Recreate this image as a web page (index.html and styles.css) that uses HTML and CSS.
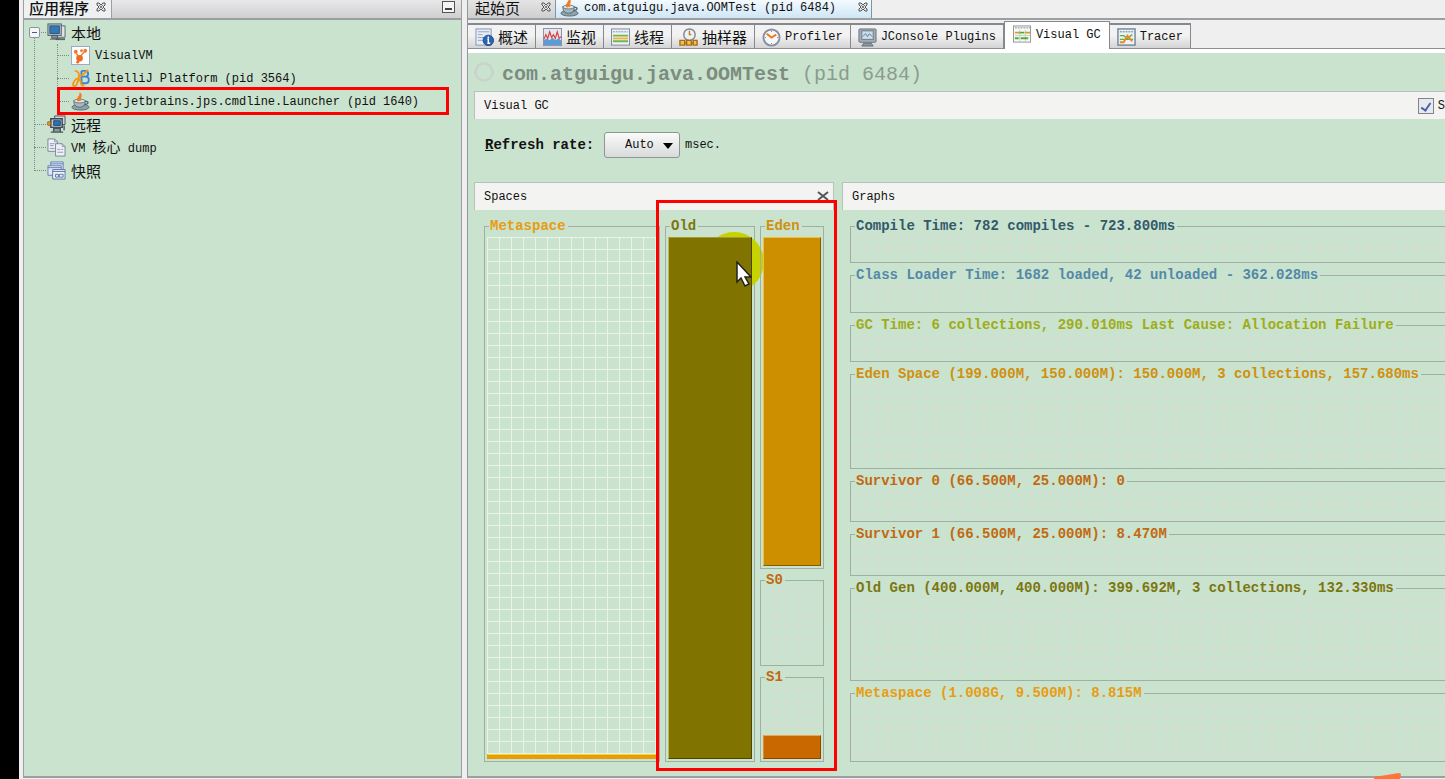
FILE: index.html
```
<!DOCTYPE html>
<html lang="zh-CN">
<head>
<meta charset="utf-8">
<title>VisualVM</title>
<link rel="stylesheet" href="styles.css">
</head>
<body>
<svg class="defs" aria-hidden="true">
  <symbol id="close" viewBox="0 0 10 10"><path d="M1 1h2l2 2 2-2h2v2L7 5l2 2v2H7L5 7 3 9H1V7l2-2-2-2z" fill="#e4e4e4" stroke="#555"/><path d="M3 3l4 4M7 3L3 7" stroke="#666" stroke-width=".8"/></symbol>
  <symbol id="java" viewBox="0 0 20 20"><ellipse cx="10" cy="16" rx="9" ry="3" fill="#8fa1ab" stroke="#596b76"/><path d="M3 9h12c0 5-2 7-6 7s-6-2-6-7z" fill="#a9b8bf" stroke="#566a75"/><ellipse cx="9" cy="9.500" rx="6" ry="2" fill="#dde5e7" stroke="#667a84"/><path d="M15 10c4-1 4 3-1 3" fill="none" stroke="#566a75" stroke-width="1.500"/><path d="M7 10C4 6 10 5 9 0c5 4 0 6 2 9z" fill="#f47b20"/></symbol>
  <symbol id="monitor" viewBox="0 0 20 20"><path d="M7 3h12v12H7z" fill="#dfe3e5" stroke="#5c6870"/><path d="M9 17h10" stroke="#5c6870" stroke-width="2"/><rect x="1" y="1" width="14" height="12" fill="#c3cdd2" stroke="#4a555e"/><rect x="3" y="3" width="10" height="8" fill="#3578b5" stroke="#24577f"/><path d="M5 13h6v3H5zM3 17h10" fill="#88949b" stroke="#4a555e"/></symbol>
</svg>
<div class="app">
  <div class="edge"></div>
  <aside class="side">
    <header class="side-head">
      <div class="side-tab"><span>应用程序</span><svg class="x"><use href="#close"/></svg></div>
      <button class="minimize" aria-label="Minimize"></button>
    </header>
    <ul class="tree">
      <li><button class="toggle" aria-label="Collapse"></button><div class="row"><svg class="ico"><use href="#monitor"/></svg><span class="cjk">本地</span></div>
        <ul class="branch">
          <li><div class="row"><svg class="ico" viewBox="0 0 20 20"><rect x=".5" y=".5" width="19" height="19" fill="#fff" stroke="#9aa6c8"/><circle cx="5" cy="6" r="2" fill="#f37a2c"/><circle cx="11" cy="5" r="1.500" fill="#f37a2c"/><circle cx="15" cy="5" r="2" fill="#f37a2c"/><path d="M14 6l-5 6" stroke="#f37a2c" stroke-width="1.500"/><path d="M5 7l3 4" stroke="#f37a2c" stroke-width="1.500"/><circle cx="9" cy="13" r="3.500" fill="#f06a1d"/><circle cx="7" cy="17" r="1.500" fill="#f06a1d"/></svg><span>VisualVM</span></div></li>
          <li><div class="row"><svg class="ico" viewBox="0 0 20 20"><path d="M11 2h4c4 0 4 6 0 6h-3 3c5 0 5 7 0 7h-4V2" fill="none" stroke="#3d83cf" stroke-width="2"/><path d="M4 2c4 0 5 3 4 8s-3 9-5 8 0-5 2-7 4-2 5 2 1 5 4 4M9 8c3-1 6-4 9-7" fill="none" stroke="#f39a16" stroke-width="2"/></svg><span>IntelliJ Platform (pid 3564)</span></div></li>
          <li class="marked"><div class="row"><svg class="ico"><use href="#java"/></svg><span>org.jetbrains.jps.cmdline.Launcher (pid 1640)</span></div></li>
        </ul>
      </li>
      <li><div class="row"><svg class="ico" viewBox="0 0 20 20"><path d="M8 1h11v9H8z" fill="#cfd5d8" stroke="#4a555e"/><path d="M4 4h12v9H4z" fill="#bcc6cb" stroke="#3f4b54" stroke-width="1.500"/><path d="M7 6h7v5H7z" fill="#2f6fae" stroke="#214e78"/><path d="M7 14h7v4H7zM4 18h13M18 11v5" stroke="#4a555e" stroke-width="1.500" fill="#899"/><circle cx="2" cy="9" r="2" fill="#e49722" stroke="#a56512"/></svg><span class="cjk">远程</span></div></li>
      <li><div class="row"><svg class="ico" viewBox="0 0 20 20"><path d="M1 1h7l3 3v10H1z" fill="#eef0f5" stroke="#7883a0"/><path d="M8 1v3h3M3 6h5M3 8h4M3 11h5" fill="none" stroke="#8e98b4"/><path d="M9 6h7l3 3v10H9z" fill="#eef0f5" stroke="#7883a0"/><path d="M16 6v3h3M11 12h3M15 12h2M11 15h6" fill="none" stroke="#8e98b4"/></svg><span>VM <span class="cjk-small">核心</span> dump</span></div></li>
      <li><div class="row"><svg class="ico" viewBox="0 0 20 20"><path d="M4 1h13v10H4z" fill="#dfe8f5" stroke="#6580b5"/><path d="M4 3h13" stroke="#6580b5"/><path d="M1 5h14v10H1z" fill="#dfe8f5" stroke="#6580b5"/><path d="M1 7h14" stroke="#6580b5"/><path d="M6 9h13v10H6z" fill="#eef2f8" stroke="#5873ab"/><path d="M6 11h13M9 14h3v3H9zM13 14h4v3h-4z" fill="none" stroke="#5873ab"/></svg><span class="cjk">快照</span></div></li>
    </ul>
  </aside>
  <div class="splitter"></div>
  <main class="main">
    <nav class="docs">
      <button class="doc first"><span class="cjk">起始页</span><svg class="x"><use href="#close"/></svg></button>
      <button class="doc current"><svg class="ico"><use href="#java"/></svg><span>com.atguigu.java.OOMTest (pid 6484)</span><svg class="x"><use href="#close"/></svg></button>
    </nav>
    <nav class="views">
      <button class="view"><svg class="ico" viewBox="0 0 20 20"><rect x="1" y="1" width="16" height="17" fill="#e8edf5" stroke="#8492ad"/><path d="M3 4h12M3 7h5M3 10h7M3 13h5" stroke="#8ca1c4"/><circle cx="14" cy="13" r="5.500" fill="#2c64b4" stroke="#174684"/><path d="M14 9v2M13 12h1v4h-1 3" stroke="#fff" stroke-width="1.500" fill="none"/></svg><span class="cjk">概述</span></button>
      <button class="view"><svg class="ico" viewBox="0 0 20 20"><rect x=".5" y=".5" width="19" height="18" fill="#e2e7f0" stroke="#8492ad"/><path d="M1 18v-5l3-2 3 2 3-3 3 3 3-2 3 2v5z" fill="#5d9bd7"/><path d="M1 12l2-5 2 4 2-7 2 6 2-3 2 4 2-7 2 7 2-2" fill="none" stroke="#df3b3b" stroke-width="1.200"/></svg><span class="cjk">监视</span></button>
      <button class="view"><svg class="ico" viewBox="0 0 20 20"><rect x=".5" y="1" width="19" height="17" fill="#eef1f5" stroke="#7a879d"/><path d="M2 4h16" stroke="#7390bb" stroke-dasharray="2 1"/><path d="M2 8h16M2 14h16" stroke="#73b74c" stroke-width="2"/><path d="M2 11h16" stroke="#efb443" stroke-width="2"/></svg><span class="cjk">线程</span></button>
      <button class="view"><svg class="ico" viewBox="0 0 20 20"><circle cx="11" cy="7" r="6" fill="#edf1f3" stroke="#7d8790" stroke-width="1.500"/><path d="M11 3v4h2" stroke="#c67b20" fill="none" stroke-width="1.500"/><path d="M1 13h5v5H1zM8 13h5v5H8zM15 13h4v5h-4zM6 16h2M13 16h2" fill="#f6c04c" stroke="#a96d16" stroke-width="1.500"/></svg><span class="cjk">抽样器</span></button>
      <button class="view"><svg class="ico" viewBox="0 0 20 20"><circle cx="10" cy="10" r="8.500" fill="#f5f6f8" stroke="#8790a0" stroke-width="2"/><path d="M10 3v1M10 16v1M3 10h1M16 10h1" stroke="#6b7585"/><path d="M5 6l5 4 5-3" fill="none" stroke="#ed7a1c" stroke-width="2"/></svg><span>Profiler</span></button>
      <button class="view"><svg class="ico" viewBox="0 0 20 20"><rect x="1" y="1" width="18" height="14" rx="1" fill="#a4adb5" stroke="#68737e"/><rect x="4" y="3" width="12" height="9" fill="#cddce7" stroke="#6b7b89"/><path d="M5 9l3-3 2 3 2-3 3 3" fill="none" stroke="#5c7d9d"/><path d="M6 16h8l2 3H4z" fill="#8d98a3" stroke="#626e79"/></svg><span>JConsole Plugins</span></button>
      <button class="view active"><svg class="ico" viewBox="0 0 20 20"><rect x=".5" y="1" width="18" height="17" fill="#f8f8f5" stroke="#8e9499"/><path d="M2 3h16" stroke="#7b8da5" stroke-dasharray="2 1"/><path d="M7 5v12M13 5v12M2 11h16" stroke="#c5cfba"/><path d="M2 8h5M13 8h5" stroke="#dc9a24" stroke-width="2"/><path d="M7 8h5M2 14h4M8 14h8" stroke="#4bad41" stroke-width="2"/></svg><span>Visual GC</span></button>
      <button class="view"><svg class="ico" viewBox="0 0 20 20"><rect x="1" y="1" width="18" height="17" fill="#edf1f3" stroke="#71869a" stroke-width="1.500"/><path d="M3 4h14" stroke="#4d7fad" stroke-dasharray="2 1"/><path d="M3 8h4l4 3 5-4M3 12h14" stroke="#61ae4c" fill="none" stroke-width="1.500"/><path d="M3 15h4l4-7 5 6" stroke="#ed8b22" fill="none" stroke-width="2"/></svg><span>Tracer</span></button>
    </nav>
    <section class="content">
      <h1 class="title"><span class="ring"></span><span><strong>com.atguigu.java.OOMTest</strong> (pid 6484)</span></h1>
      <div class="bar"><span>Visual GC</span><label class="check"><input type="checkbox" checked><span>S</span></label></div>
      <div class="refresh"><label for="rate"><u>R</u>efresh rate:</label><span class="pick"><select id="rate"><option>Auto</option></select></span><span>msec.</span></div>
      <div class="panes">
        <section class="pane spaces">
          <header class="bar"><span>Spaces</span><button class="shut" aria-label="Close"><svg viewBox="0 0 12 12"><path d="M1 2l10 8M11 2L1 10" stroke="#555" stroke-width="2"/></svg></button></header>
          <div class="pools">
            <fieldset class="meta"><legend>Metaspace</legend><div class="plot bright"><div class="fill thin"></div></div></fieldset>
            <fieldset class="old"><legend>Old</legend><div class="plot"><div class="fill full"></div></div>
              <span class="halo"></span>
              <svg class="cursor" viewBox="0 0 16 26"><path d="M1 1v20l4-4 4 8 4-2-4-7h6z" fill="#fff" stroke="#222" stroke-width="1.500"/></svg>
            </fieldset>
            <div class="young">
              <fieldset class="eden"><legend>Eden</legend><div class="plot"><div class="fill full"></div></div></fieldset>
              <fieldset class="surv"><legend>S0</legend><div class="plot"></div></fieldset>
              <fieldset class="surv"><legend>S1</legend><div class="plot"><div class="fill part"></div></div></fieldset>
            </div>
            <div class="frame"></div>
          </div>
        </section>
        <section class="pane">
          <header class="bar"><span>Graphs</span></header>
          <div class="graphs">
            <fieldset class="compile"><legend>Compile Time: 782 compiles - 723.800ms</legend><div class="plot"></div></fieldset>
            <fieldset class="loader"><legend>Class Loader Time: 1682 loaded, 42 unloaded - 362.028ms</legend><div class="plot"></div></fieldset>
            <fieldset class="gc"><legend>GC Time: 6 collections, 290.010ms Last Cause: Allocation Failure</legend><div class="plot"></div></fieldset>
            <fieldset class="eden"><legend>Eden Space (199.000M, 150.000M): 150.000M, 3 collections, 157.680ms</legend><div class="plot"></div></fieldset>
            <fieldset class="surv"><legend>Survivor 0 (66.500M, 25.000M): 0</legend><div class="plot"></div></fieldset>
            <fieldset class="surv"><legend>Survivor 1 (66.500M, 25.000M): 8.470M</legend><div class="plot"></div></fieldset>
            <fieldset class="old"><legend>Old Gen (400.000M, 400.000M): 399.692M, 3 collections, 132.330ms</legend><div class="plot"></div></fieldset>
            <fieldset class="meta"><legend>Metaspace (1.008G, 9.500M): 8.815M</legend><div class="plot"></div></fieldset>
          </div>
        </section>
      </div>
    </section>
  </main>
</div>
<svg class="corner" viewBox="0 0 28 6"><path d="M0 4L25 0l2 1-1 5H0z" fill="#ff7438"/></svg>
</body>
</html>
```
FILE: styles.css
```
:root {
  --green: #cae3cf;
  --line: #a0aea4;
  --latin: "Liberation Mono", "Noto Sans CJK SC", monospace;
}
*, *::before, *::after { box-sizing: border-box; }
body {
  margin: 0;
  overflow: hidden;
  background: #efefef;
  color: #111;
  font: 12px/16px var(--latin);
  white-space: nowrap;
}
button, select, input { font: inherit; color: inherit; margin: 0; padding: 0; }
.defs { position: absolute; width: 0; height: 0; }
.cjk { font: 15px/16px "Noto Sans CJK SC", sans-serif; }
.cjk-small { font: 14px/16px "Noto Sans CJK SC", sans-serif; }
.ico { width: 19px; height: 19px; flex: none; }
.x { width: 10px; height: 10px; flex: none; }

.app {
  display: grid;
  grid-template-columns: 19px 443px 5px minmax(0, 1fr);
  height: 100vh;
  padding-bottom: 1px;
}
.edge { background: #000; margin-bottom: -1px; }

.side {
  display: flex;
  flex-direction: column;
  margin-left: 4px;
  background: var(--green);
  border: solid #9b9fa2;
  border-width: 0 1px 2px;
}
.side-head {
  display: flex;
  justify-content: space-between;
  height: 20px;
  background: linear-gradient(#e9e9ea, #cfcfd1);
  border-bottom: 2px solid #9b9fa2;
}
.side-tab {
  display: flex;
  gap: 7px;
  width: 88px;
  padding-left: 5px;
  background: #eef0f2;
  border-right: 1px solid #9b9fa2;
  font: 500 15px/16px "Noto Sans CJK SC", sans-serif;
}
.side-tab .x { margin-top: 2px; }
.minimize {
  width: 13px;
  height: 12px;
  margin: 1px 6px 0 0;
  background: linear-gradient(#444, #444) center 6px / 7px 2px no-repeat #f4f4f4;
  border: 1px solid #555;
}
.tree, .tree ul { list-style: none; margin: 0; padding: 0; position: relative; }
.tree { margin: 1px 0 0 10px; }
.tree li { position: relative; padding-left: 13px; }
.tree .branch { margin-left: 10px; }
.tree .branch li { padding-left: 14px; }
.row { display: flex; align-items: center; gap: 5px; height: 23px; }
.tree::before, .branch::before {
  content: "";
  position: absolute;
  inset: 12px auto 11px 0;
  border-left: 1px dotted #7d8a80;
}
.branch::before { top: 0; }
.tree li::before {
  content: "";
  position: absolute;
  top: 11px;
  left: 0;
  width: 12px;
  border-top: 1px dotted #7d8a80;
}
.toggle {
  position: absolute;
  z-index: 1;
  top: 6px;
  left: -5px;
  width: 11px;
  height: 11px;
  background: linear-gradient(#445a9a, #445a9a) center / 5px 1px no-repeat #f5f5f5;
  border: 1px solid #8d949a;
  border-radius: 2px;
}
.marked::after {
  content: "";
  position: absolute;
  inset: -3px 12px -2px 0;
  border: 3px solid #f00;
}

.main {
  display: flex;
  flex-direction: column;
  min-width: 0;
  border-left: 1px solid #90969a;
  border-bottom: 2px solid #9b9fa2;
}
.docs { display: flex; height: 20px; border-bottom: 2px solid #9b9fa2; }
.doc {
  display: flex;
  align-items: flex-start;
  border: 0;
  border-right: 1px solid #8594a3;
  background: linear-gradient(#e4e4e5, #cfcfd1);
}
.doc .x { margin-top: 2px; }
.first { width: 88px; padding: 0 4px 0 7px; justify-content: space-between; }
.current { width: 316px; padding: 0 3px 0 4px; background: linear-gradient(#f4fafe, #cfe6f6); }
.current .ico { margin: -2px 5px 0 0; }
.current .x { margin-left: auto; }
.views {
  display: flex;
  align-items: flex-end;
  height: 29px;
  border-bottom: 1px solid #8a8f93;
}
.view {
  display: flex;
  align-items: center;
  gap: 4px;
  height: 25px;
  padding: 1px 7px 0;
  border: 1px solid #85898d;
  border-width: 2px 1px 0 0;
  background: linear-gradient(#f2f2f2 45%, #d4d4d6);
}
.active {
  height: 28px;
  margin-bottom: -1px;
  padding: 0 8px 2px;
  border-left-width: 1px;
  border-top-width: 1px;
  background: #fff;
}

.content {
  flex: 1;
  min-height: 0;
  display: flex;
  flex-direction: column;
  padding-left: 6px;
  background: var(--green);
  border-top: 4px solid #fff;
}
.title {
  display: flex;
  align-items: center;
  gap: 8px;
  height: 38px;
  margin: 0;
  padding-top: 6px;
  color: #8b9c8e;
  font: 20px/24px var(--latin);
}
.title strong { color: #7c8c7f; }
.ring {
  width: 20px;
  height: 20px;
  margin-bottom: 6px;
  border: 3px solid #c8d5cc;
  border-radius: 50%;
}
.bar {
  display: flex;
  align-items: center;
  height: 28px;
  padding: 1px 0 0 9px;
  background: #f3f4f2;
  border: solid #b5c2b8;
  border-width: 1px 0 0 1px;
}
.check { display: flex; align-items: center; gap: 4px; margin-left: auto; }
.check input {
  appearance: none;
  width: 16px;
  height: 16px;
  background: #e6eaee;
  border: 1px solid #818589;
  display: grid;
  place-items: center;
}
.check input:checked::after {
  content: "";
  width: 6px;
  height: 10px;
  border: solid #4b62a8;
  border-width: 0 2px 2px 0;
  transform: rotate(35deg);
}
.refresh { display: flex; align-items: center; height: 63px; padding: 0 0 11px 11px; }
.refresh label { width: 119px; font-size: 14px; font-weight: bold; }
.pick { position: relative; margin-right: 5px; }
.pick select {
  display: block;
  appearance: none;
  width: 76px;
  height: 26px;
  padding-left: 20px;
  background: linear-gradient(#fafafa, #d9dadb);
  border: 1px solid #8e9691;
  border-radius: 3px;
}
.pick::after {
  content: "";
  position: absolute;
  top: 11px;
  right: 7px;
  border: 5px solid transparent;
  border-top: 6px solid #000;
  border-bottom: 0;
}

.panes {
  flex: 1;
  min-height: 0;
  display: grid;
  grid-template-columns: 360px minmax(0, 1fr);
  gap: 8px;
  padding-bottom: 14px;
}
.pane { display: flex; flex-direction: column; min-height: 0; }
.spaces .bar { border-right-width: 1px; }
.shut { width: 12px; height: 12px; margin: 0 4px 2px auto; border: 0; background: none; }
.shut svg { display: block; }
.pools {
  flex: 1;
  min-height: 0;
  position: relative;
  display: grid;
  grid-template-columns: 176px 90px 64px;
  gap: 5px;
  padding: 9px 9px 0 10px;
}
.young { display: grid; grid-template-rows: 349fr 93fr 92fr; gap: 4px; min-height: 0; }
.graphs {
  flex: 1;
  min-height: 0;
  display: grid;
  grid-template-rows: 44fr 44fr 44fr 101fr 48fr 48fr 100fr 75fr;
  gap: 5px;
  padding: 9px 0 0 8px;
}
fieldset {
  position: relative;
  z-index: 0;
  display: flex;
  flex-direction: column;
  min-width: 0;
  min-height: 0;
  margin: 0;
  padding: 3px 2px 2px;
  border: 1px solid var(--line);
}
.graphs fieldset { border-right: 0; padding-right: 0; }
legend {
  margin-left: 2px;
  padding: 0 2px 0 1px;
  font-size: 14px;
  font-weight: bold;
  line-height: 15px;
}
.plot {
  flex: 1;
  min-height: 0;
  display: flex;
  align-items: flex-end;
  background:
    linear-gradient(#d7dcd5 1px, transparent 1px) 0 0 / 12px 12px,
    linear-gradient(90deg, #d7dcd5 1px, transparent 1px) 0 0 / 12px 12px;
}
.bright {
  background:
    linear-gradient(#e9f3e6 1px, transparent 1px) 0 0 / 12px 12px,
    linear-gradient(90deg, #e9f3e6 1px, transparent 1px) 0 0 / 12px 12px;
}
.fill { width: 100%; border: 1px solid; }
.full { align-self: stretch; }
.thin { height: 5px; }
.part { height: 24px; }
.compile { color: #33596b; }
.loader { color: #5488a8; }
.gc { color: #9eac19; }
.eden { color: #cf900e; }
.surv { color: #c2690f; }
.old { color: #7c7610; }
.meta { color: #e89c12; }
.old .fill { background: #807300; border-color: #a69b28 #4d4600 #4d4600 #c0b956; }
.eden .fill { background: #cd8e00; border-color: #f0c03a #845c00 #845c00 #f0c03a; }
.surv .fill { background: #ca6800; border-color: #f3a54c #8b4700 #8b4700 #e48a2d; }
.meta .fill { background: #e69d08; border-color: #f1d535 #e69d08 #e69d08; }
.halo {
  position: absolute;
  z-index: -1;
  top: -2px;
  right: -10px;
  width: 60px;
  height: 60px;
  border-radius: 50%;
  background: #c6d300;
}
.cursor { position: absolute; top: 27px; right: 2px; width: 16px; height: 26px; }
.frame {
  position: absolute;
  inset: -10px -3px -9px 182px;
  border: 3px solid #f00;
}
.corner { position: fixed; right: 43px; bottom: 0; width: 28px; height: 6px; }
```
